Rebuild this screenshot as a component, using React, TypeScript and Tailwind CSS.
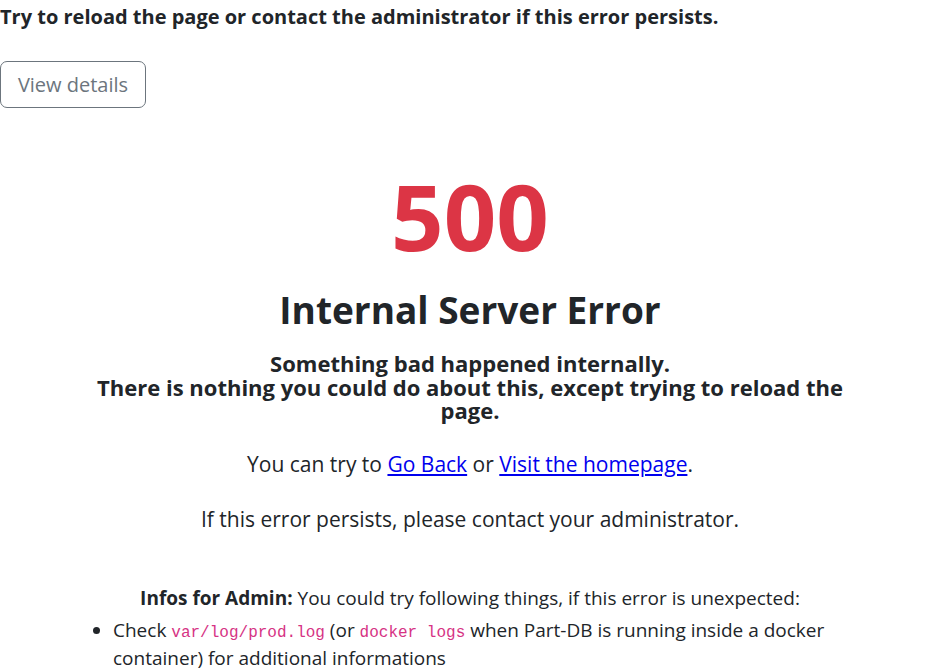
import React from 'react';

export default function App() {
  return (
    <div className="min-h-screen bg-white text-[#212529]" style={{ fontFamily: '"Open Sans", "Noto Sans", sans-serif' }}>
      <p className="pt-[4px] text-[20px] font-bold leading-[26px]">
        Try to reload the page or contact the administrator if this error persists.
      </p>
      <button
        type="button"
        className="mt-[31px] h-[47px] w-[146px] rounded-[7px] border border-[#6c757d] text-[20px] text-[#6c757d]"
      >
        View details
      </button>

      <div className="ml-[75px] mt-[53px] w-[790px] text-center">
        <h1 className="text-[92px] font-bold leading-[110px] text-[#dc3545]">500</h1>
        <h2 className="mt-[15px] text-[37px] font-bold leading-[48px]">Internal Server Error</h2>
        <h4 className="mt-[18px] text-[22px] font-bold leading-[23.5px]">
          Something bad happened internally.
          <br />
          There is nothing you could do about this, except trying to reload the page.
        </h4>
        <p className="mt-[26px] text-[21px] leading-[30px]">
          You can try to{' '}
          <a href="#" className="text-[#0000ee] underline">Go Back</a> or{' '}
          <a href="#" className="text-[#0000ee] underline">Visit the homepage</a>.
        </p>
        <p className="mt-[25px] text-[21px] leading-[30px]">
          If this error persists, please contact your administrator.
        </p>

        <p className="mt-[50px] text-[19px] leading-[28px]">
          <b>Infos for Admin:</b> You could try following things, if this error is unexpected:
        </p>
        <ul className="mt-[4px] list-disc pl-[38px] text-left text-[19px] leading-[28px]">
          <li>
            Check <code className="text-[16px] leading-none text-[#d63384]" style={{ fontFamily: '"Liberation Mono", monospace' }}>var/log/prod.log</code> (or{' '}
            <code className="text-[16px] leading-none text-[#d63384]" style={{ fontFamily: '"Liberation Mono", monospace' }}>docker logs</code> when Part-DB is running inside a docker
            container) for additional informations
          </li>
        </ul>
      </div>
    </div>
  );
}
